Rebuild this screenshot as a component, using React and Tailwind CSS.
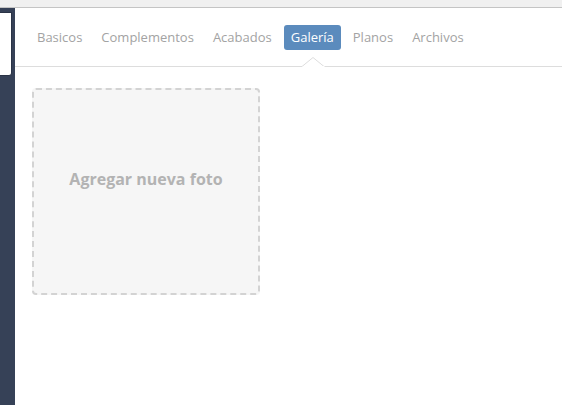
import React from "react";

const tabs = ["Basicos", "Complementos", "Acabados", "Galería", "Planos", "Archivos"];

export default function App() {
  return (
    <div className="w-[562px] h-[405px] flex flex-col overflow-hidden bg-white" style={{ fontFamily: '"Open Sans", "DejaVu Sans", sans-serif' }}>
      <div className="h-[8px] bg-[#f0f0f0] border-b border-[#c4c4c4] shrink-0" />
      <div className="flex flex-1 min-h-0">
        <div className="w-[15px] bg-[#364157] shrink-0 pt-[4px]">
          <div className="w-[12px] h-[64px] bg-white border border-l-0 border-[#2a3346] rounded-br-[3px]" />
        </div>
        <div className="flex-1 flex flex-col">
          <div className="flex items-center gap-[5px] pl-[15px] pt-[17px] pb-[16px] border-b border-[#dddddd]">
            {tabs.map((t) => {
              const active = t === "Galería";
              return (
                <div key={t} className="relative">
                  <div
                    className={
                      active
                        ? "h-[25px] px-[7px] flex items-center rounded-[3px] bg-[#5b8bbd] text-white text-[13px]"
                        : "h-[25px] px-[7px] flex items-center text-[#a3a3a3] text-[13px]"
                    }
                  >
                    {t}
                  </div>
                  {active && (
                    <svg className="absolute left-[18px] top-[32px]" width="23" height="10" viewBox="0 0 23 10">
                      <path d="M0 9.5 L11 0.5 L22 9.5" fill="white" stroke="#dddddd" strokeWidth="1" />
                      <rect x="0.5" y="9" width="22" height="1" fill="white" />
                    </svg>
                  )}
                </div>
              );
            })}
          </div>
          <div className="pl-[17px] pt-[21px]">
            <div className="w-[228px] h-[207px] bg-[#f6f6f6] border-2 border-dashed border-[#d3d3d3] rounded-[4px] flex justify-center pt-[79px]">
              <span className="text-[16px] font-bold text-[#b3b3b3] leading-[20px]">Agregar nueva foto</span>
            </div>
          </div>
        </div>
      </div>
    </div>
  );
}
